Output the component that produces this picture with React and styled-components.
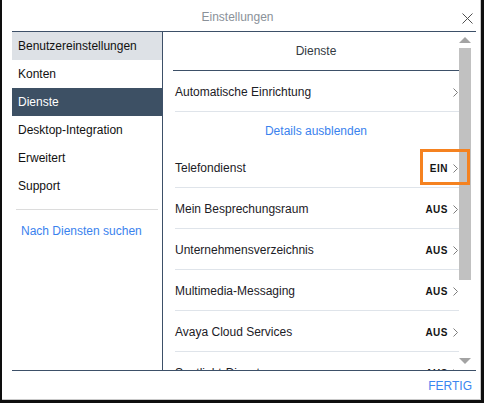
import React from "react";
import styled, { createGlobalStyle } from "styled-components";

const GlobalStyle = createGlobalStyle`
  html, body {
    margin: 0;
    padding: 0;
    background: #ffffff;
  }
  * { box-sizing: border-box; }
`;

const Window = styled.div`
  width: 484px;
  height: 403px;
  display: flex;
  flex-direction: column;
  background: #ffffff;
  border-left: 2px solid #0e0e0e;
  border-right: 3px solid #0e0e0e;
  border-bottom: 3px solid #0e0e0e;
  box-shadow: inset -1px -1px 0 #c9c9c9;
  font-family: "Liberation Sans", Arial, sans-serif;
  font-size: 12px;
  color: #1c2026;
`;

const TitleBar = styled.header`
  height: 31px;
  flex: none;
  display: grid;
  grid-template-columns: 1fr auto 1fr;
  align-items: center;
  padding-right: 8px;
`;

const Title = styled.h1`
  grid-column: 2;
  margin: 0;
  padding-top: 3px;
  font-size: 12px;
  font-weight: normal;
  color: #8a9199;
`;

const CloseButton = styled.button`
  grid-column: 3;
  justify-self: end;
  width: 11px;
  height: 11px;
  padding: 0;
  margin-top: 5px;
  border: 0;
  background: none;
  display: flex;
  cursor: pointer;
`;

const Body = styled.div`
  height: 340px;
  flex: none;
  margin: 0 5px 0 10px;
  border-top: 1px solid #3d5068;
  border-bottom: 1px solid #3d5068;
  display: flex;
`;

const Sidebar = styled.nav`
  width: 151px;
  flex: none;
  border-right: 1px solid #3d5068;
  display: flex;
  flex-direction: column;
`;

const NavItem = styled.div`
  height: 28px;
  display: flex;
  align-items: center;
  padding-left: 6px;
  color: ${(p) => (p.$active ? "#ffffff" : "#111111")};
  background: ${(p) =>
    p.$active ? "#3d5064" : p.$hover ? "#dde1e6" : "transparent"};
`;

const NavDivider = styled.hr`
  margin: 9px 4px 0 4px;
  border: 0;
  border-top: 1px solid #dcdcdc;
`;

const SearchLink = styled.a`
  padding: 14px 0 0 9px;
  color: #3a82ee;
  text-decoration: none;
  line-height: 14px;
`;

const Pane = styled.section`
  flex: 1;
  position: relative;
  display: flex;
`;

const Content = styled.div`
  flex: 1;
  padding-left: 10px;
  overflow: hidden;
  display: flex;
  flex-direction: column;
`;

const PaneHeader = styled.div`
  height: 39px;
  flex: none;
  padding-top: 12px;
  line-height: 14px;
  text-align: center;
  color: #333a42;
  border-bottom: 1px solid #3d5068;
`;

const Row = styled.div`
  height: 41px;
  flex: none;
  margin-left: 2px;
  padding: 2px 1px 0 0;
  display: flex;
  align-items: center;
  justify-content: space-between;
  border-bottom: 1px solid #dfe4ea;
`;

const DetailsRow = styled.div`
  height: 35px;
  flex: none;
  display: flex;
  align-items: center;
  justify-content: center;
  color: #3a82ee;
  padding-top: 2px;
`;

const Label = styled.span`
  color: #1c2026;
`;

const Trail = styled.span`
  display: flex;
  align-items: center;
  gap: 5px;
`;

const Status = styled.span`
  font-size: 10px;
  font-weight: bold;
  letter-spacing: 0.5px;
  color: #141414;
`;

const Scrollbar = styled.div`
  width: 12px;
  flex: none;
  margin-right: 5px;
  padding: 5px 0 6px;
  display: flex;
  flex-direction: column;
  align-items: center;
`;

const Thumb = styled.div`
  width: 12px;
  height: 232px;
  margin-top: 5px;
  background: #c1c1c1;
`;

const DownArrow = styled.svg`
  margin-top: auto;
`;

const Highlight = styled.div`
  position: absolute;
  top: 117px;
  right: 6px;
  width: 50px;
  height: 36px;
  border: 3px solid #f58220;
  pointer-events: none;
`;

const Footer = styled.footer`
  flex: 1;
  display: flex;
  align-items: center;
  justify-content: flex-end;
  padding: 1px 9px 0 0;
`;

const DoneButton = styled.button`
  border: 0;
  background: none;
  padding: 0;
  font-family: inherit;
  font-size: 12px;
  color: #3a86f0;
  cursor: pointer;
`;

const Chevron = () => (
  <svg width="5" height="9" viewBox="0 0 5 9">
    <path d="M0.5 0.5 L4.5 4.5 L0.5 8.5" fill="none" stroke="#7d7d7d" strokeWidth="1" />
  </svg>
);

const navItems = [
  { label: "Benutzereinstellungen", hover: true },
  { label: "Konten" },
  { label: "Dienste", active: true },
  { label: "Desktop-Integration" },
  { label: "Erweitert" },
  { label: "Support" },
];

const services = [
  { label: "Telefondienst", status: "EIN" },
  { label: "Mein Besprechungsraum", status: "AUS" },
  { label: "Unternehmensverzeichnis", status: "AUS" },
  { label: "Multimedia-Messaging", status: "AUS" },
  { label: "Avaya Cloud Services", status: "AUS" },
  { label: "Spotlight-Dienst", status: "AUS" },
];

export default function App() {
  return (
    <>
      <GlobalStyle />
      <Window>
        <TitleBar>
          <Title>Einstellungen</Title>
          <CloseButton aria-label="Schließen">
            <svg width="11" height="11" viewBox="0 0 11 11">
              <path d="M0.5 0.5 L10.5 10.5 M10.5 0.5 L0.5 10.5" stroke="#505050" strokeWidth="1" />
            </svg>
          </CloseButton>
        </TitleBar>
        <Body>
          <Sidebar>
            {navItems.map((item) => (
              <NavItem key={item.label} $active={item.active} $hover={item.hover}>
                {item.label}
              </NavItem>
            ))}
            <NavDivider />
            <SearchLink href="#">Nach Diensten suchen</SearchLink>
          </Sidebar>
          <Pane>
            <Content>
              <PaneHeader>Dienste</PaneHeader>
              <Row>
                <Label>Automatische Einrichtung</Label>
                <Trail>
                  <Chevron />
                </Trail>
              </Row>
              <DetailsRow>Details ausblenden</DetailsRow>
              {services.map((s) => (
                <Row key={s.label}>
                  <Label>{s.label}</Label>
                  <Trail>
                    <Status>{s.status}</Status>
                    <Chevron />
                  </Trail>
                </Row>
              ))}
            </Content>
            <Scrollbar>
              <svg width="12" height="6" viewBox="0 0 12 6">
                <path d="M6 0 L12 6 L0 6 Z" fill="#a3a3a3" />
              </svg>
              <Thumb />
              <DownArrow width="12" height="6" viewBox="0 0 12 6">
                <path d="M0 0 L12 0 L6 6 Z" fill="#a3a3a3" />
              </DownArrow>
            </Scrollbar>
            <Highlight />
          </Pane>
        </Body>
        <Footer>
          <DoneButton>FERTIG</DoneButton>
        </Footer>
      </Window>
    </>
  );
}
